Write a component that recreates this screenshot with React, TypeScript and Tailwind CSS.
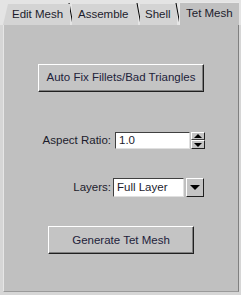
import React from "react"

const TABS = ["Edit Mesh", "Assemble", "Shell"]

const Slash = () => (
    <svg width="6" height="22" viewBox="0 0 6 22" className="shrink-0 -mx-[2px] self-end">
        <line x1="1" y1="0" x2="5" y2="22" stroke="#000" strokeWidth="1" />
    </svg>
)

const RaisedButton = ({ label, className }: { label: string; className: string }) => (
    <button
        className={`h-[28px] bg-[#c4c4c4] border border-t-white border-l-white border-r-[#202020] border-b-[#202020] shadow-[inset_-1px_-1px_0_#808080] text-[11.5px] text-[#22223a] ${className}`}
    >
        {label}
    </button>
)

export default function App() {
    return (
        <div className="w-[241px] h-[295px] bg-[#d6d6d6] flex flex-col font-['Liberation_Sans',Arial,sans-serif] select-none">
            <div className="h-[25px] flex items-end pl-[3px] bg-[#e4e4e4]">
                {TABS.map((tab, i) => (
                    <React.Fragment key={tab}>
                        <div
                            className={`h-[21px] bg-[#d4d4d4] flex items-center text-[11.5px] text-[#1c1c2c] ${i === 0 ? "w-[67px] pl-[9px] [clip-path:polygon(5px_0,100%_0,100%_100%,0_100%)]" : i === 1 ? "w-[66px] pl-[6px]" : "w-[37px] pl-[5px]"}`}
                        >
                            {tab}
                        </div>
                        <Slash />
                    </React.Fragment>
                ))}
                <div className="h-[23px] flex-1 mr-[2px] bg-[#c0c0c0] border-l border-t border-[#e8e8e8] flex items-start pt-[2px] pl-[6px] text-[11.5px] text-[#1c1c2c]">
                    Tet Mesh
                </div>
            </div>
            <div className="ml-[3px] mr-[2px] h-[267px] bg-[#c0c0c0] border-l border-l-[#e6e6e6] border-r border-r-[#808080] border-b border-b-[#9a9a9a] flex flex-col items-center">
                <RaisedButton label="Auto Fix Fillets/Bad Triangles" className="mt-[39px] w-[166px]" />
                <div className="mt-[40px] w-full flex items-center text-[11.5px] text-[#1c1c2c]">
                    <span className="w-[107px] text-right">Aspect Ratio:</span>
                    <div className="ml-[4px] w-[75px] h-[17px] bg-white border border-t-[#404040] border-l-[#404040] border-r-[#e0e0e0] border-b-[#e0e0e0] flex items-center pl-[3px]">
                        1.0
                    </div>
                    <div className="ml-[1px] w-[14px] h-[17px] flex flex-col">
                        <div className="h-[8px] bg-[#c4c4c4] border border-t-white border-l-white border-r-[#202020] border-b-[#404040] flex items-center justify-center">
                            <svg width="8" height="4" viewBox="0 0 8 4"><path d="M0 4L4 0L8 4Z" fill="#000" /></svg>
                        </div>
                        <div className="h-[9px] bg-[#c4c4c4] border border-t-white border-l-white border-r-[#202020] border-b-[#202020] flex items-center justify-center">
                            <svg width="8" height="4" viewBox="0 0 8 4"><path d="M0 0L8 0L4 4Z" fill="#000" /></svg>
                        </div>
                    </div>
                </div>
                <div className="mt-[29px] w-full flex items-center text-[11.5px] text-[#1c1c2c]">
                    <span className="w-[107px] text-right">Layers:</span>
                    <div className="ml-[2px] w-[71px] h-[19px] bg-white border border-t-[#404040] border-l-[#404040] border-r-[#e0e0e0] border-b-[#e0e0e0] flex items-center pl-[3px]">
                        Full Layer
                    </div>
                    <div className="ml-[2px] w-[18px] h-[19px] bg-[#c4c4c4] border border-t-white border-l-white border-r-[#202020] border-b-[#202020] flex items-center justify-center">
                        <svg width="10" height="5" viewBox="0 0 10 5"><path d="M0 0L10 0L5 5Z" fill="#000" /></svg>
                    </div>
                </div>
                <RaisedButton label="Generate Tet Mesh" className="mt-[29px] w-[146px]" />
            </div>
        </div>
    )
}
